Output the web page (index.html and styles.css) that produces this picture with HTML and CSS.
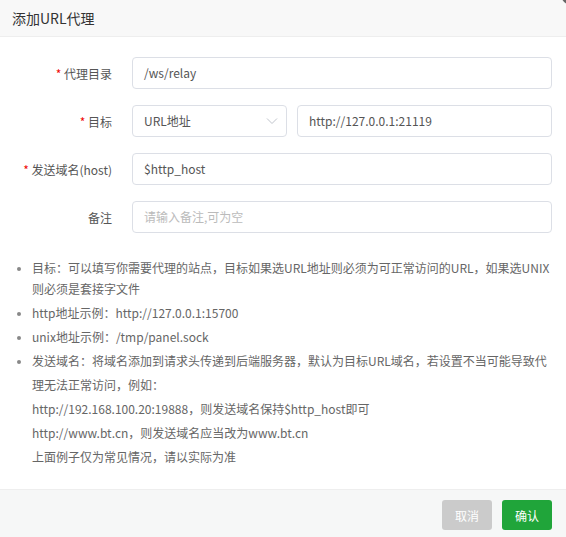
FILE: index.html
```html
<!DOCTYPE html>
<html lang="zh">
<head>
<meta charset="utf-8">
<link rel="stylesheet" href="styles.css">
</head>
<body>
<div class="dialog">
  <div class="header">添加URL代理</div>
  <span class="close"></span>
  <div class="content">
    <div class="form">
      <div class="row">
        <label class="label"><span class="req">*</span> 代理目录</label>
        <div class="field"><div class="input">/ws/relay</div></div>
      </div>
      <div class="row">
        <label class="label"><span class="req">*</span> 目标</label>
        <div class="field split">
          <div class="input select">URL地址
            <svg class="chev" width="12" height="8" viewBox="0 0 12 8"><path d="M1 1.5 L6 6.5 L11 1.5" fill="none" stroke="#c0c4cc" stroke-width="1"/></svg>
          </div>
          <div class="input grow">http://127.0.0.1:21119</div>
        </div>
      </div>
      <div class="row">
        <label class="label"><span class="req">*</span> 发送域名(host)</label>
        <div class="field"><div class="input">$http_host</div></div>
      </div>
      <div class="row">
        <label class="label">备注</label>
        <div class="field"><div class="input placeholder">请输入备注,可为空</div></div>
      </div>
    </div>
    <ul class="tips">
      <li class="first">目标：可以填写你需要代理的站点，目标如果选URL地址则必须为可正常访问的URL，如果选UNIX则必须是套接字文件</li>
      <li>http地址示例：http://127.0.0.1:15700</li>
      <li>unix地址示例：/tmp/panel.sock</li>
      <li>发送域名：将域名添加到请求头传递到后端服务器，默认为目标URL域名，若设置不当可能导致代理无法正常访问，例如：<br>http://192.168.100.20:19888，则发送域名保持$http_host即可<br>http://www.bt.cn，则发送域名应当改为www.bt.cn<br>上面例子仅为常见情况，请以实际为准</li>
    </ul>
  </div>
  <div class="footer">
    <button class="btn cancel">取消</button>
    <button class="btn ok">确认</button>
  </div>
</div>
</body>
</html>
```
FILE: styles.css
```css
* { box-sizing: border-box; }
html, body { margin: 0; padding: 0; background: #fff; }
body {
  font-family: "Noto Sans CJK SC", "Noto Sans", sans-serif;
  width: 566px;
  height: 537px;
  overflow: hidden;
}
.dialog {
  position: relative;
  width: 566px;
  height: 537px;
  display: flex;
  flex-direction: column;
  background: #fff;
}
.header {
  height: 37px;
  line-height: 36px;
  padding-left: 12px;
  font-size: 14px;
  color: #333;
  background: #f8f8f8;
  border-bottom: 1px solid #eee;
}
.close {
  position: absolute;
  right: -22px;
  top: -22px;
  width: 28px;
  height: 28px;
  border-radius: 50%;
  background: #666;
}
.content {
  flex: 1;
  padding-top: 20px;
}
.form {
  display: flex;
  flex-direction: column;
  gap: 16px;
}
.row {
  display: flex;
  align-items: center;
  height: 32px;
}
.label {
  width: 112px;
  margin-right: 20px;
  text-align: right;
  font-size: 12px;
  color: #555;
}
.req { color: #ef0808; }
.field {
  width: 420px;
  display: flex;
}
.split { gap: 10px; }
.input {
  flex: 1;
  height: 32px;
  line-height: 30px;
  border: 1px solid #dcdfe6;
  border-radius: 4px;
  padding-left: 11px;
  font-size: 12px;
  color: #555;
}
.select {
  flex: 0 0 155px;
  display: flex;
  justify-content: space-between;
  align-items: center;
  padding-right: 8px;
}
.chev { display: block; }
.grow { flex: 1; }
.placeholder { color: #bbb; }
.tips {
  margin: 24px 14px 0 0;
  padding-left: 32px;
  font-size: 12px;
  line-height: 24px;
  color: #666;
  list-style: disc;
}
.tips .first { line-height: 21px; margin-bottom: 2px; }
.tips li::marker { color: #888; font-size: 10px; }
.footer {
  height: 48px;
  background: #f6f7f7;
  border-top: 1px solid #eee;
  display: flex;
  justify-content: flex-end;
  align-items: flex-start;
  gap: 10px;
  padding: 10px 14px 0 0;
}
.btn {
  width: 50px;
  height: 30px;
  border: none;
  border-radius: 3px;
  font-family: inherit;
  font-size: 12px;
  color: #fff;
  padding: 0;
}
.cancel { background: #cbcbcb; }
.ok { background: #20a53a; }
```
